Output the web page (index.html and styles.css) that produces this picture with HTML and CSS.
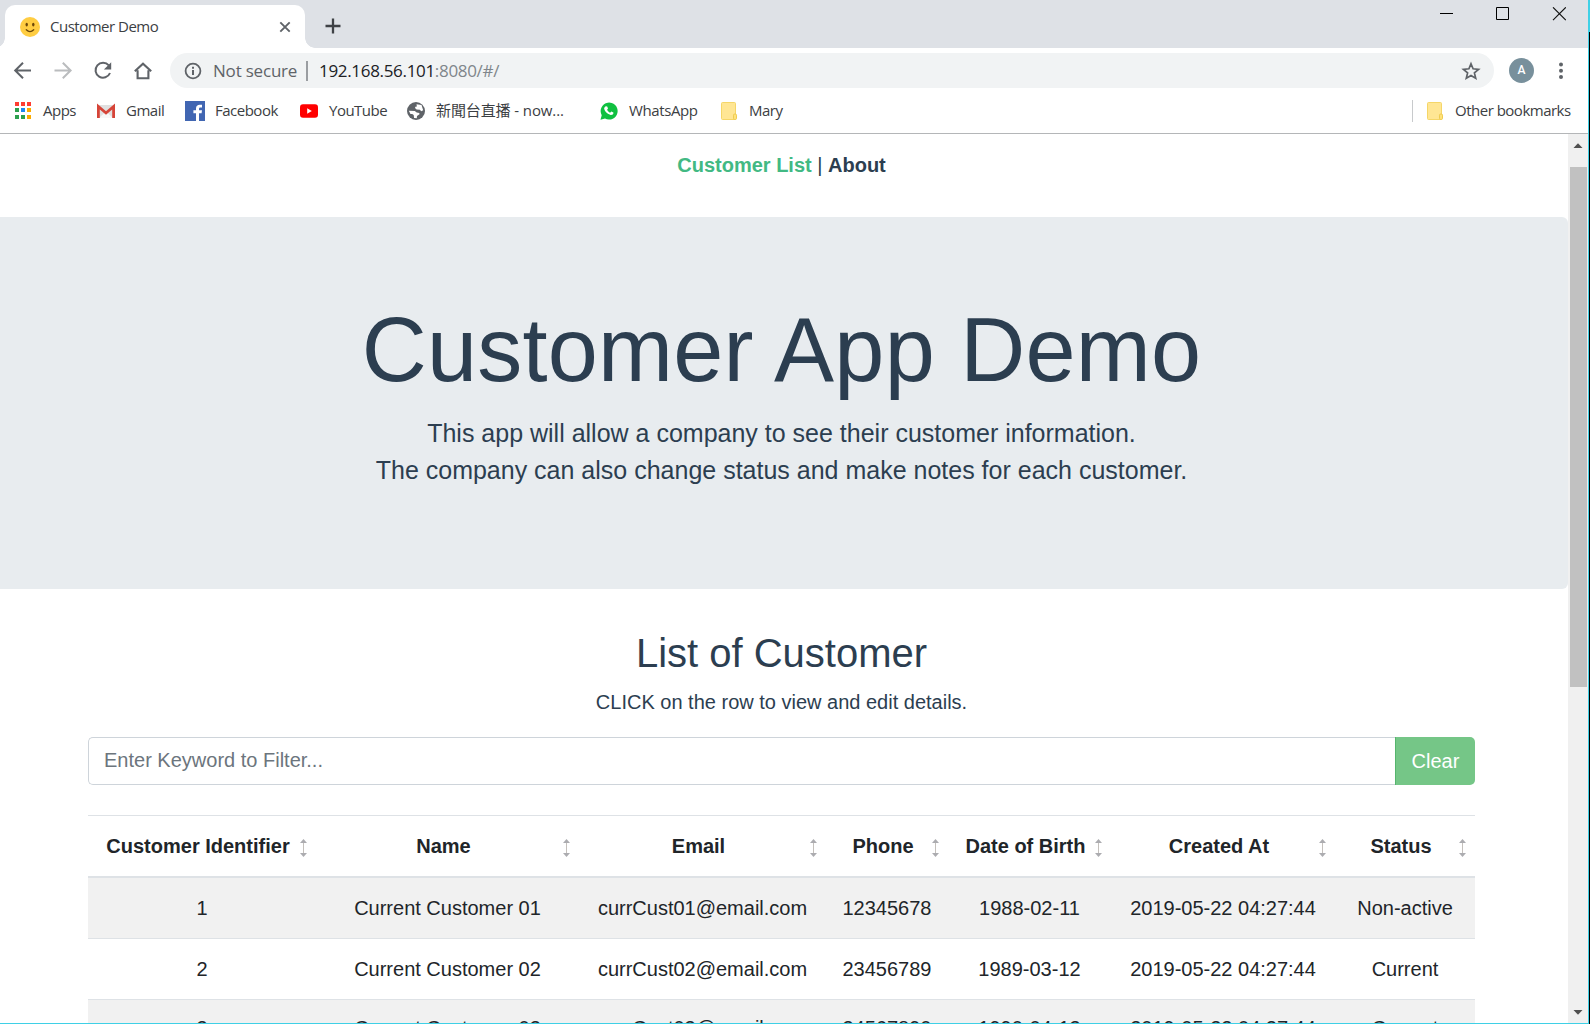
FILE: index.html
```html
<!DOCTYPE html>
<html lang="en">
<head>
<meta charset="utf-8">
<title>Customer Demo</title>
<link rel="stylesheet" href="styles.css">
</head>
<body>
<div class="window">
  <header class="tabstrip">
    <div class="tab">
      <svg class="favicon" viewBox="0 0 20 20"><circle cx="10" cy="10" r="10" fill="#ffcd42"/><ellipse cx="6.7" cy="7.6" rx="1.2" ry="1.9" fill="#6b4608"/><ellipse cx="13.3" cy="7.6" rx="1.2" ry="1.9" fill="#6b4608"/><path d="M6.3 12.8Q10 16.6 13.7 12.8" fill="none" stroke="#6b4608" stroke-width="1.3" stroke-linecap="round"/></svg>
      <span class="tab-title">Customer Demo</span>
      <svg class="tab-close" viewBox="0 0 12 12"><path d="M1.3 1.3l9.4 9.4M10.7 1.3l-9.4 9.4" stroke="#5f6368" stroke-width="1.9"/></svg>
    </div>
    <svg class="new-tab" viewBox="0 0 16 16"><path d="M8 .5v15M.5 8h15" stroke="#3f4246" stroke-width="2.3"/></svg>
    <div class="controls">
      <svg viewBox="0 0 14 14"><path d="M0 6.5h13" stroke="#000" shape-rendering="crispEdges"/></svg>
      <svg viewBox="0 0 14 14"><path d="M.5.5h12v12H.5z" fill="none" stroke="#000"/></svg>
      <svg viewBox="0 0 14 14"><path d="M1 .3l12.800 12.800M13.800.3L1 13.100" stroke="#111" stroke-width="1.1"/></svg>
    </div>
  </header>

  <div class="toolbar">
    <svg class="tool" viewBox="0 0 20 20"><path d="M18 9.500H3M10 1.700L2.200 9.500l7.800 7.800" fill="none" stroke="#5f6368" stroke-width="2"/></svg>
    <svg class="tool" viewBox="0 0 20 20"><path d="M1.500 9.500H17M9.800 1.700l7.800 7.800-7.800 7.800" fill="none" stroke="#babcbe" stroke-width="2"/></svg>
    <svg class="tool" viewBox="0 0 20 20"><path d="M15.800 4.400A7.500 7.500 0 1 0 17 12" fill="none" stroke="#5f6368" stroke-width="2"/><path d="M18.200 1.200v7.300h-7.300z" fill="#5f6368"/></svg>
    <svg class="tool" viewBox="0 0 20 20"><path d="M1.800 10.300L10 2.700l8.200 7.600M4.600 9.200v8h10.800v-8" fill="none" stroke="#5f6368" stroke-width="2.1"/></svg>
    <div class="omnibox">
      <svg class="info" viewBox="0 0 18 18"><circle cx="9" cy="9" r="7.400" fill="none" stroke="#5f6368" stroke-width="1.800"/><path d="M9 8v5M9 4.800v1.900" stroke="#5f6368" stroke-width="2"/></svg>
      <span class="secure">Not secure</span>
      <span class="divider"></span>
      <span class="url">192.168.56.101<span class="port">:8080/#/</span></span>
      <svg class="star" viewBox="0 0 20 20"><path d="M10 2.800l2.100 5 5.500.5-4.200 3.600 1.300 5.300-4.700-2.800-4.700 2.800 1.300-5.300-4.200-3.600 5.500-.5z" fill="none" stroke="#5f6368" stroke-width="1.700"/></svg>
    </div>
    <span class="avatar">A</span>
    <svg class="menu" viewBox="0 0 4 18"><g fill="#5f6368"><circle cx="2" cy="2.500" r="2"/><circle cx="2" cy="8.800" r="2"/><circle cx="2" cy="15.100" r="2"/></g></svg>
  </div>

  <div class="bookmarks">
    <div class="bookmark apps"><svg viewBox="0 0 20 20" shape-rendering="crispEdges"><path d="M2 1h4v4H2zM8 1h4v4H8zM14 1h4v4h-4z" fill="#ff3d32"/><path d="M2 7h4v4H2zM2 14h4v4H2zM8 14h4v4H8z" fill="#2da04e"/><path d="M8 7h4v4H8z" fill="#1e88f0"/><path d="M14 7h4v4h-4zM14 14h4v4h-4z" fill="#fbab00"/></svg><span>Apps</span></div>
    <div class="bookmark gmail"><svg viewBox="0 0 20 20"><path d="M1 4h18v13H1z" fill="#e0e0e0"/><path d="M3 17l7-6.500L17 17z" fill="#f7f7f7"/><path d="M2.400 17V5.500L10 12l7.600-6.500V17" fill="none" stroke="#d64438" stroke-width="2.800"/></svg><span>Gmail</span></div>
    <div class="bookmark facebook"><svg viewBox="0 0 20 20"><path d="M0 0h20v20H0z" fill="#4166b2"/><path d="M11 20v-7.700H8.400v-3H11V7.500c0-2.600 1.600-3.800 3.700-3.800l2.300.1v2.700h-1.500c-1.200 0-1.500.6-1.500 1.500v1.300h3l-.4 3H14V20z" fill="#fff"/></svg><span>Facebook</span></div>
    <div class="bookmark youtube"><svg viewBox="0 0 20 20"><rect x="1" y="3.300" width="18" height="13.400" rx="3" fill="#f00"/><path d="M8.200 7.200v5.600l4.600-2.800z" fill="#fff"/></svg><span>YouTube</span></div>
    <div class="bookmark news"><svg viewBox="0 0 20 20"><circle cx="10" cy="10" r="9" fill="#5f6368"/><path d="M10.500 3.200l5 .8 1.700 5.300-2 1-1.300-1.600-3.300-.2-1.600-1.500.4-1.300 1.500-.3zM2.800 9.800l6 .2 1.900 1.500 2.600.4.200 1.400-2.500 1.800-.2 2.100-2.700-.3-.4-2.800-1.500-1.200H4.500z" fill="#fff"/></svg><span>新聞台直播 - now...</span></div>
    <div class="bookmark whatsapp"><svg viewBox="0 0 20 20"><path d="M1.500 18.800l1.200-4.600A8.500 8.500 0 1 1 6 17.500z" fill="#10c040"/><path d="M6.900 5.300l1.300.2.8 2.100-.9 1.200c.7 1.400 1.700 2.300 3 2.900l1.200-1.200 2.100 1-.1 1.300c-.8 1.200-2 1.400-3.200 1-3.200-1-4.900-2.800-5.900-5.700-.2-1.100.4-2.200 1.700-2.800z" fill="#fff"/></svg><span>WhatsApp</span></div>
    <div class="bookmark mary"><svg viewBox="0 0 20 20"><rect x="2.500" y="1.500" width="14" height="17" rx="1" fill="#ffe694" stroke="#f5d668"/><rect x="14.500" y="13" width="3" height="5.500" rx="1.200" fill="#ffe27a" stroke="#efcb50"/></svg><span>Mary</span></div>
    <div class="bookmark other"><svg viewBox="0 0 20 20"><rect x="2.500" y="1.500" width="14" height="17" rx="1" fill="#ffe694" stroke="#f5d668"/><rect x="14.500" y="13" width="3" height="5.500" rx="1.200" fill="#ffe27a" stroke="#efcb50"/></svg><span>Other bookmarks</span></div>
  </div>

  <div class="viewport">
    <main class="page">
      <nav class="nav"><a class="active">Customer List</a> | <a>About</a></nav>
      <section class="jumbotron">
        <h1>Customer App Demo</h1>
        <p>This app will allow a company to see their customer information.<br>The company can also change status and make notes for each customer.</p>
      </section>
      <section class="list">
        <h2>List of Customer</h2>
        <p class="hint">CLICK on the row to view and edit details.</p>
        <div class="filter">
          <input type="text" placeholder="Enter Keyword to Filter...">
          <button>Clear</button>
        </div>
        <table class="customers">
          <colgroup><col class="c-id"><col class="c-name"><col class="c-email"><col class="c-phone"><col class="c-birth"><col class="c-created"><col class="c-status"></colgroup>
          <thead><tr><th>Customer Identifier</th><th>Name</th><th>Email</th><th>Phone</th><th>Date of Birth</th><th>Created At</th><th>Status</th></tr></thead>
          <tbody>
            <tr><td>1</td><td>Current Customer 01</td><td>currCust01@email.com</td><td>12345678</td><td>1988-02-11</td><td>2019-05-22 04:27:44</td><td>Non-active</td></tr>
            <tr><td>2</td><td>Current Customer 02</td><td>currCust02@email.com</td><td>23456789</td><td>1989-03-12</td><td>2019-05-22 04:27:44</td><td>Current</td></tr>
            <tr><td>3</td><td>Current Customer 03</td><td>currCust03@email.com</td><td>34567890</td><td>1990-04-13</td><td>2019-05-22 04:27:44</td><td>Current</td></tr>
          </tbody>
        </table>
      </section>
    </main>
    <div class="scrollbar">
      <svg class="arrow" viewBox="0 0 20 20"><path d="M5.500 14l4.500-4.700 4.500 4.700z" fill="#505050"/></svg>
      <div class="thumb"></div>
      <svg class="arrow down" viewBox="0 0 20 20"><path d="M5.500 7l4.500 4.700L14.500 7z" fill="#505050"/></svg>
    </div>
  </div>
</div>
<div class="desktop-edge"></div>
</body>
</html>
```

FILE: styles.css
```css
* { box-sizing: border-box; }
body {
  margin: 0;
  display: flex;
  width: 1590px;
  height: 1024px;
  overflow: hidden;
  background: #fff;
  font-family: "Liberation Sans", Arial, sans-serif;
}
svg { display: block; flex: none; }
.window {
  width: 1589px;
  height: 1024px;
  display: flex;
  flex-direction: column;
  border-right: 1px solid #3fd0e6;
  border-bottom: 1px solid #3fd0e6;
}
.desktop-edge {
  width: 1px;
  background: linear-gradient(#3fd0e6 32px, #000 32px);
}

/* Browser chrome */
.tabstrip, .toolbar, .bookmarks {
  flex: none;
  display: flex;
  align-items: center;
  font-family: "Open Sans", "Noto Sans CJK TC", sans-serif;
  color: #3c4043;
  white-space: nowrap;
}
.tabstrip {
  height: 48px;
  background: #dee1e6;
  align-items: flex-start;
}
.tab {
  position: relative;
  width: 300px;
  height: 43px;
  margin: 5px 0 0 5px;
  padding: 0 14px 0 15px;
  display: flex;
  align-items: center;
  border-radius: 10px 10px 0 0;
  background: #fff;
}
.tab::before, .tab::after {
  content: "";
  position: absolute;
  bottom: 0;
  width: 10px;
  height: 10px;
}
.tab::before { left: -10px; background: radial-gradient(circle at 0 0, transparent 9.5px, #fff 10px); }
.tab::after { right: -10px; background: radial-gradient(circle at 100% 0, transparent 9.5px, #fff 10px); }
.favicon { width: 20px; height: 20px; }
.tab-title { flex: 1; margin-left: 10px; padding-bottom: 2px; font-size: 15px; letter-spacing: -0.5px; }
.tab-close { width: 12px; height: 12px; }
.new-tab { width: 16px; height: 16px; margin: 18px 0 0 20px; }
.controls { display: flex; gap: 42px; margin: 7px 22px 0 auto; }
.controls svg { width: 14px; height: 14px; }

.toolbar { height: 45px; padding: 0 25px 0 13px; }
.tool { width: 20px; height: 20px; margin-right: 20px; }
.tool + .tool + .tool + .tool { margin-right: 17px; }
.omnibox {
  width: 1324px;
  height: 35px;
  padding: 0 13px 0 14px;
  display: flex;
  align-items: center;
  border-radius: 18px;
  background: #f1f3f4;
  font-size: 17px;
}
.info { width: 18px; height: 18px; }
.secure { width: 93px; margin-left: 11px; color: #5f6368; letter-spacing: -0.2px; }
.divider { width: 2px; height: 20px; background: #9a9da1; }
.url { margin-left: 11px; color: #202124; letter-spacing: -0.32px; }
.port { color: #80868b; }
.star { width: 20px; height: 20px; margin-left: auto; }
.avatar {
  width: 25px;
  height: 25px;
  margin-left: 15px;
  border-radius: 50%;
  background: #78909c;
  color: #fff;
  font: 500 12px/25px Roboto, sans-serif;
  text-align: center;
}
.menu { width: 4px; height: 18px; margin-left: auto; }

.bookmarks {
  height: 41px;
  padding: 0 18px 5px 13px;
  border-bottom: 1px solid #b4b6b8;
  font-size: 15px;
  letter-spacing: -0.5px;
}
.bookmark { display: flex; align-items: center; gap: 10px; }
.bookmark svg { width: 20px; height: 20px; }
.bookmark span { padding-bottom: 2px; }
.apps { width: 83px; }
.gmail { width: 89px; }
.facebook { width: 114px; }
.youtube { width: 107px; }
.news { width: 193px; letter-spacing: -0.1px; }
.whatsapp { width: 120px; letter-spacing: -0.4px; }
.other { width: 158px; margin-left: auto; padding-left: 12px; border-left: 1px solid #c8cacc; }

/* Page */
.viewport { flex: 1; min-height: 0; display: flex; overflow: hidden; }
.page {
  flex: 1;
  margin-left: -5px;
  overflow: hidden;
  color: #2c3e50;
  font-size: 20px;
  line-height: 30px;
  text-align: center;
}
.nav { height: 83px; padding-top: 16px; }
.nav a { font-weight: 700; }
.nav .active { color: #42b983; }
.jumbotron {
  height: 372px;
  padding-top: 79px;
  border-radius: 6px;
  background: #e8ecef;
}
h1, h2 { margin: 0 0 10px; font-weight: 400; }
h1 { margin-bottom: 11px; font-size: 90px; line-height: 108px; letter-spacing: 0.25px; }
.jumbotron p { margin: 0; font-size: 25px; line-height: 37px; }
.list { width: 1573px; padding: 40px 93px 0; }
h2 { font-size: 40px; line-height: 48px; }
.hint { margin: 0 0 20px; }
.filter { display: flex; height: 48px; margin-bottom: 30px; }
.filter input {
  flex: 1;
  padding: 0 15px 2px;
  border: 1px solid #ced4da;
  border-right: 0;
  border-radius: 5px 0 0 5px;
  background: #fff;
  font: inherit;
}
.filter input::placeholder { color: #6c757d; opacity: 1; }
.filter button {
  width: 80px;
  padding: 0;
  border: 0;
  border-left: 1px solid #55b56d;
  border-radius: 0 5px 5px 0;
  background: #75c687;
  color: #fff;
  font: inherit;
}
.customers {
  width: 1387px;
  table-layout: fixed;
  border-spacing: 0;
  color: #212529;
}
.c-id { width: 228px; }
.c-name { width: 263px; }
.c-email { width: 247px; }
.c-phone { width: 122px; }
.c-birth { width: 163px; }
.c-created { width: 224px; }
.c-status { width: 140px; }
th, td { padding: 0; border-top: 1px solid #dee2e6; white-space: nowrap; }
th {
  position: relative;
  height: 63px;
  padding: 0 8px 0 0;
  border-bottom: 2px solid #dee2e6;
}
th::after {
  content: "";
  position: absolute;
  top: 23px;
  right: 9px;
  width: 7px;
  height: 18px;
  background: url("data:image/svg+xml,%3Csvg xmlns='http://www.w3.org/2000/svg' width='7' height='18'%3E%3Cpath d='M3.5 1v16' stroke='%23c4c0bc'/%3E%3Cpath d='M3.5 0L7 4H0zM3.5 18L7 14H0z' fill='%23acacb0'/%3E%3C/svg%3E");
}
td { height: 61px; padding-bottom: 1px; }
tbody tr:first-child td { height: 60px; border-top: 0; }
tbody tr:last-child td { padding-bottom: 4px; }
tbody tr:nth-child(odd) { background: #f1f1f1; }

.scrollbar {
  width: 20px;
  display: flex;
  flex-direction: column;
  align-items: center;
  background: #f0f0f0;
}
.arrow { width: 20px; height: 20px; }
.thumb { width: 17px; height: 520px; margin-top: 13px; background: #c1c1c1; }
.down { margin-top: auto; }
```
